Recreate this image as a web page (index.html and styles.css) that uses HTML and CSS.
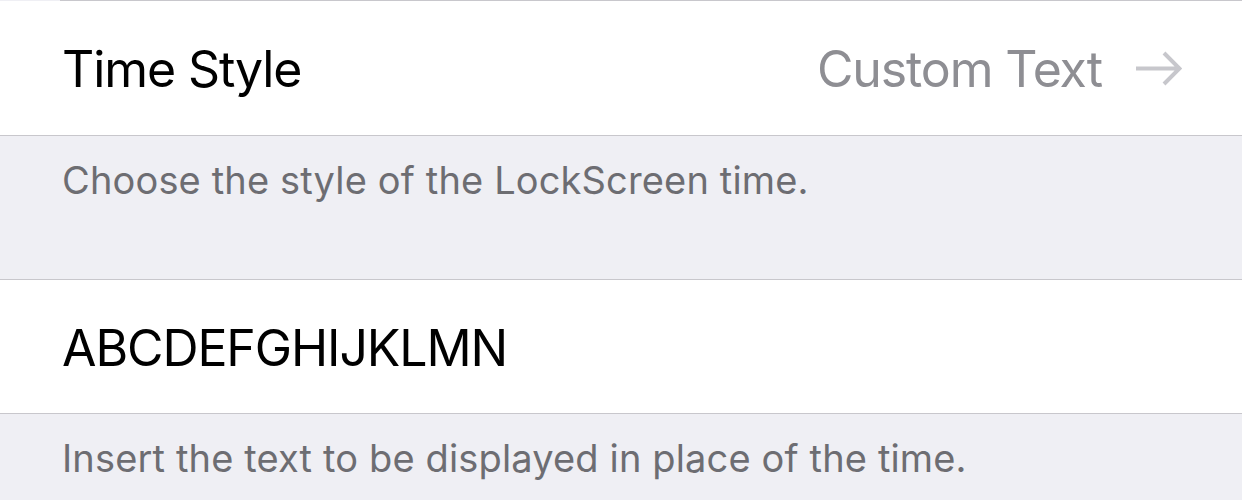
FILE: index.html
```html
<!DOCTYPE html>
<html lang="en">
<head>
<meta charset="UTF-8" />
<meta name="viewport" content="width=device-width, initial-scale=1" />
<title>Time Style</title>
<link rel="stylesheet" href="styles.css">
</head>
<body>
<main class="settings">
  <div class="sep-inset"></div>
  <section class="group">
    <div class="cell">
      <span class="label">Time Style</span>
      <span class="detail">Custom Text</span>
      <svg class="arrow" width="47" height="35" viewBox="0 0 47 35" aria-hidden="true">
        <path d="M1 17.5H44.5M29 2L44.5 17.5L29 33" fill="none" stroke="#c7c7cc" stroke-width="4" stroke-linecap="butt" stroke-linejoin="miter"/>
      </svg>
    </div>
  </section>
  <p class="footer">Choose the style of the LockScreen time.</p>
  <section class="group group-top">
    <div class="cell cell-text">
      <span class="label">ABCDEFGHIJKLMN</span>
    </div>
  </section>
  <p class="footer">Insert the text to be displayed in place of the time.</p>
</main>
</body>
</html>
```

FILE: styles.css
```css
:root{--bg:#efeff4;--line:#c8c7cc;--txt:#000;--sub:#8e8e93;--foot:#6d6d72;}
*,*:before,*:after{box-sizing:border-box;}
body{margin:0;background:var(--bg);font-family:Inter,'Noto Sans',sans-serif;color:var(--txt);}
.settings{display:flex;flex-direction:column;}
.sep-inset{height:1px;margin-left:60px;background:var(--line);}
.group{background:#fff;border-bottom:1px solid var(--line);}
.group-top{border-top:1px solid var(--line);}
.cell{height:134px;display:flex;align-items:center;padding:0 60px 0 62px;}
.cell-text{height:133px;}
.label{font-size:50px;letter-spacing:-1.1px;flex:1;white-space:nowrap;padding-top:2px;}
.detail{font-size:50px;color:var(--sub);letter-spacing:-1.1px;margin-right:33px;padding-top:2px;}
.arrow{flex-shrink:0;}
.footer{margin:0;height:143px;padding:25px 62px 0;font-size:38px;line-height:1;letter-spacing:.15px;color:var(--foot);}
```
